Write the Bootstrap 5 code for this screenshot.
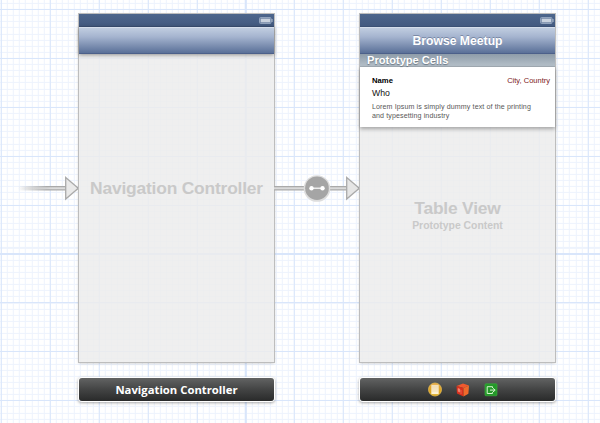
<!DOCTYPE html>
<html lang="en">
<head>
<meta charset="utf-8">
<title>Storyboard</title>
<link rel="stylesheet" href="https://cdn.jsdelivr.net/npm/bootstrap@5.3.0/dist/css/bootstrap.min.css">
<style>
body{width:600px;height:423px;overflow:hidden;font-family:"Liberation Sans",Arial,sans-serif;line-height:1;
background:
repeating-linear-gradient(90deg,#d9e6fb 0 1px,transparent 1px 48.9px) .8px 0/700px 100%,
repeating-linear-gradient(180deg,#d9e6fb 0 1px,transparent 1px 48.9px) 0 9px/100% 500px,
repeating-linear-gradient(90deg,#edf3fd 0 1px,transparent 1px 6.1125px) .8px 0/700px 100%,
repeating-linear-gradient(180deg,#edf3fd 0 1px,transparent 1px 6.1125px) 0 2.9px/100% 500px,#fff}
.side{width:79px}.link-gap{width:86px}
.side svg,.link-gap svg{display:block;margin-top:156px;overflow:visible}
.scene{width:195px;margin-top:14px}
.screen{height:348px;background:rgba(236,236,236,.84);box-shadow:0 0 0 1px #bdbdbd,0 1px 3px rgba(0,0,0,.25)}
.status{height:13px;background:linear-gradient(#4d668c,#435a80);border-bottom:1px solid #3c5175;padding-right:1px}
.titlebar{height:27px;background:linear-gradient(#c0cde0,#a5b4cf 35%,#5a7098);border-top:1px solid #d5deeb;border-bottom:1px solid #4c608a;color:#fff;font-size:12.2px;text-shadow:0 -1px 0 rgba(50,65,95,.4)}
.titlebar span{position:relative;top:1px}
.plain{box-shadow:0 1px 4px rgba(0,0,0,.4)}
.section-title{height:13px;background:linear-gradient(#8e9ca9,#b4bfc8);color:#fff;font-size:11.1px;padding-left:7px;border-bottom:1px solid #a3adb5;text-shadow:0 1px 1px rgba(60,75,90,.6)}
.section-title span{position:relative;top:1px}
.cell{height:60px;background:#fff;padding:10px 5px 0 12px;box-shadow:0 2px 4px rgba(0,0,0,.32);color:#111}
.nm{font-size:7.7px;color:#000}.city{font-size:7.5px;color:#7c1822}
.who{font-size:8.7px;margin-top:4px}
.desc{font-size:7.1px;letter-spacing:.1px;line-height:9px;color:#585858;margin-top:6px;white-space:nowrap}
.ghost{color:#c9c9c9}
.big{font-size:17.4px;letter-spacing:-.19px;white-space:nowrap}.sub{font-size:10.4px}
.nav-name{margin-top:126px}.table-name{margin-top:73px}
.dock{height:23px;margin-top:16px;border-radius:3px;background:linear-gradient(#626363,#434444 50%,#292a2a);box-shadow:0 0 0 1px #fff,0 1px 3px 1px rgba(0,0,0,.35);color:#fff;font:700 11.3px "Open Sans",sans-serif}
.dock svg{margin-left:11px}
</style>
</head>
<body>
<svg width="0" height="0" class="position-absolute">
<defs>
<linearGradient id="fade"><stop offset="0" stop-color="#aaa" stop-opacity="0"/><stop offset=".6" stop-color="#aaa"/></linearGradient>
<linearGradient id="inner"><stop offset="0" stop-color="#dcdcdc" stop-opacity="0"/><stop offset=".7" stop-color="#dcdcdc"/></linearGradient>
<linearGradient id="gold" x2="0" y2="1"><stop stop-color="#e8a53c"/><stop offset="1" stop-color="#d5a20b"/></linearGradient>
<linearGradient id="paper" x2="0" y2="1"><stop stop-color="#f5dfb4"/><stop offset="1" stop-color="#fff4d8"/></linearGradient>
<symbol id="battery" viewBox="0 0 14 7"><rect x=".5" y=".5" width="11.5" height="6" rx="1" fill="#6e83a3" stroke="#91a3bd"/><rect x="1.7" y="1.7" width="9.3" height="3.6" fill="#c9d2de"/><path d="M12.5 2h1v3h-1z" fill="#b4c0d0"/></symbol>
</defs>
</svg>
<main class="d-flex align-items-start">
<div class="side flex-shrink-0 pt-3">
<svg width="79" height="36" viewBox="0 0 79 36">
<path d="M18 14h48v4.4H18z" fill="url(#fade)"/><path d="M18 15.2h49v2H18z" fill="url(#inner)"/>
<path d="M65.7 5.5L78.3 16.2 65.7 27z" fill="#e9e9e9" stroke="#aaa" stroke-width="1.3"/>
</svg>
</div>
<section class="scene flex-shrink-0">
<div class="screen d-flex flex-column">
<div class="status d-flex justify-content-end align-items-center"><svg width="14" height="7"><use href="#battery"/></svg></div>
<div class="titlebar plain"></div>
<div class="big ghost nav-name fw-bold text-center">Navigation Controller</div>
</div>
<div class="dock d-flex justify-content-center align-items-center">Navigation Controller</div>
</section>
<div class="link-gap flex-shrink-0 pt-3">
<svg width="86" height="36" viewBox="0 0 86 36">
<path d="M0 16.2h73" stroke="#aaa" stroke-width="4.4"/><path d="M0 16.2h73" stroke="#dadada" stroke-width="2"/>
<circle cx="43" cy="16.5" r="13.3" fill="#ddd"/><circle cx="43" cy="16.2" r="11.8" fill="#a5a5a5"/>
<path d="M37.5 16.2h11" stroke="#fff" stroke-width="1.2"/><circle cx="37.5" cy="16.2" r="2.2" fill="#fff"/><circle cx="48.5" cy="16.2" r="2.2" fill="#fff"/>
<path d="M72.7 5.5L85.3 16.2 72.7 27z" fill="#e5e5e5" stroke="#aaa" stroke-width="1.3"/>
</svg>
</div>
<section class="scene flex-shrink-0">
<div class="screen d-flex flex-column">
<div class="status d-flex justify-content-end align-items-center"><svg width="14" height="7"><use href="#battery"/></svg></div>
<div class="titlebar d-flex justify-content-center align-items-center fw-bold"><span>Browse Meetup</span></div>
<div class="section-title d-flex align-items-center fw-bold"><span>Prototype Cells</span></div>
<div class="cell">
<div class="d-flex justify-content-between"><span class="nm fw-bold">Name</span><span class="city">City, Country</span></div>
<div class="who">Who</div>
<div class="desc">Lorem Ipsum is simply dummy text of the printing<br>and typesetting industry</div>
</div>
<div class="ghost table-name fw-bold text-center"><div class="big">Table View</div><div class="sub mt-1">Prototype Content</div></div>
</div>
<div class="dock d-flex justify-content-center align-items-center">
<svg width="72" height="16" viewBox="0 0 72 16">
<circle cx="8" cy="7.5" r="6.5" fill="url(#gold)" stroke="#e6bd55" stroke-width=".8"/><path d="M4.3 2.8h7.4v9.4H4.3z" fill="url(#paper)"/><path d="M4.3 5h7.4M4.3 7h7.4M4.3 9h7.4" stroke="#e6d3a9" stroke-width=".5"/>
<path d="M29.5 4l6.5-2.5L42 3.6 36.5 6z" fill="#f0592e"/><path d="M29.5 4l7 2v8.5l-6.5-3z" fill="#d9301d"/><path d="M36.5 6L42 3.6l-.6 8.2-4.9 2.7z" fill="#f06a2b"/><path d="M31 6.5l1.8.6v3l-1.5-.5zM34 8v4" fill="#f58c78" stroke="#f58c78" stroke-width=".5"/>
<rect x="58" y="1.8" width="12" height="12" rx="1" fill="#249829" stroke="#39b53c" stroke-width=".6"/><path d="M65.5 6V4.7h-5.3v6.8h5.3v-1.3M63 8.1h4.5M66 6.3l2.2 1.8L66 9.9" fill="none" stroke="#d5f3ce" stroke-width="1"/>
</svg>
</div>
</section>
</main>
<script src="https://cdn.jsdelivr.net/npm/bootstrap@5.3.0/dist/js/bootstrap.bundle.min.js"></script>
</body>
</html>
